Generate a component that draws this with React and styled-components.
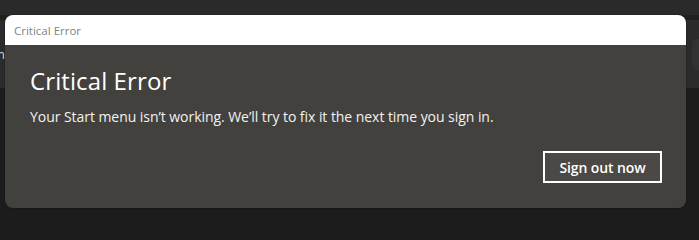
import styled, { createGlobalStyle } from 'styled-components';

const GlobalStyle = createGlobalStyle`
  html, body {
    margin: 0;
    padding: 0;
    background: #1c1c1c;
  }
  body {
    font-family: 'Open Sans', 'Noto Sans', sans-serif;
  }
`;

const Screen = styled.div`
  position: relative;
  width: 699px;
  height: 218px;
  overflow: hidden;
  background: #1c1c1c;
  display: flex;
  flex-direction: column;
`;

const TopBar = styled.div`
  height: 15px;
  background: #2a2a2a;
`;

const Divider = styled.div`
  height: 5px;
  background: #202020;
`;

const Band = styled.div`
  height: 68px;
  background: #2b2b2b;
  display: flex;
  align-items: center;
  justify-content: space-between;
  color: #cfcfcf;
  font-size: 13px;
`;

const EdgeText = styled.span`
  margin-left: -3px;
`;

const EdgePill = styled.div`
  width: 40px;
  height: 31px;
  margin-right: -33px;
  border-radius: 5px;
  background: #323232;
`;

const Dialog = styled.div`
  position: absolute;
  left: 5px;
  top: 15px;
  width: 681px;
  height: 193px;
  border-radius: 8px;
  overflow: hidden;
  display: flex;
  flex-direction: column;
  box-shadow: 0 0 0 1px rgba(0, 0, 0, 0.15);
`;

const TitleBar = styled.div`
  height: 30px;
  background: #ffffff;
  display: flex;
  align-items: center;
  padding-left: 9px;
  font-size: 11.5px;
  color: #7b8682;
`;

const Body = styled.div`
  flex: 1;
  background: #43413d;
  display: flex;
  flex-direction: column;
  padding: 20px 24px 25px 25px;
  color: #ffffff;
`;

const Heading = styled.h1`
  margin: 0;
  font-weight: 400;
  font-size: 24px;
  line-height: 32px;
  letter-spacing: 0.1px;
`;

const Message = styled.p`
  margin: 10px 0 0;
  font-size: 14px;
  line-height: 20px;
  letter-spacing: -0.05px;
  color: #f2f2f2;
`;

const Actions = styled.div`
  margin-top: auto;
  display: flex;
  justify-content: flex-end;
`;

const ActionButton = styled.button`
  width: 119px;
  height: 32px;
  box-sizing: border-box;
  border: 2px solid #ffffff;
  background: #4c4845;
  color: #ffffff;
  font-family: inherit;
  font-size: 14px;
  font-weight: 600;
  letter-spacing: -0.1px;
  padding: 0;
  cursor: pointer;
`;

const App = () => {
  return (
    <>
      <GlobalStyle />
      <Screen>
        <TopBar />
        <Divider />
        <Band>
          <EdgeText>n</EdgeText>
          <EdgePill />
        </Band>
        <Dialog>
          <TitleBar>Critical Error</TitleBar>
          <Body>
            <Heading>Critical Error</Heading>
            <Message>
              Your Start menu isn’t working. We’ll try to fix it the next time you sign in.
            </Message>
            <Actions>
              <ActionButton>Sign out now</ActionButton>
            </Actions>
          </Body>
        </Dialog>
      </Screen>
    </>
  );
};

export default App;
